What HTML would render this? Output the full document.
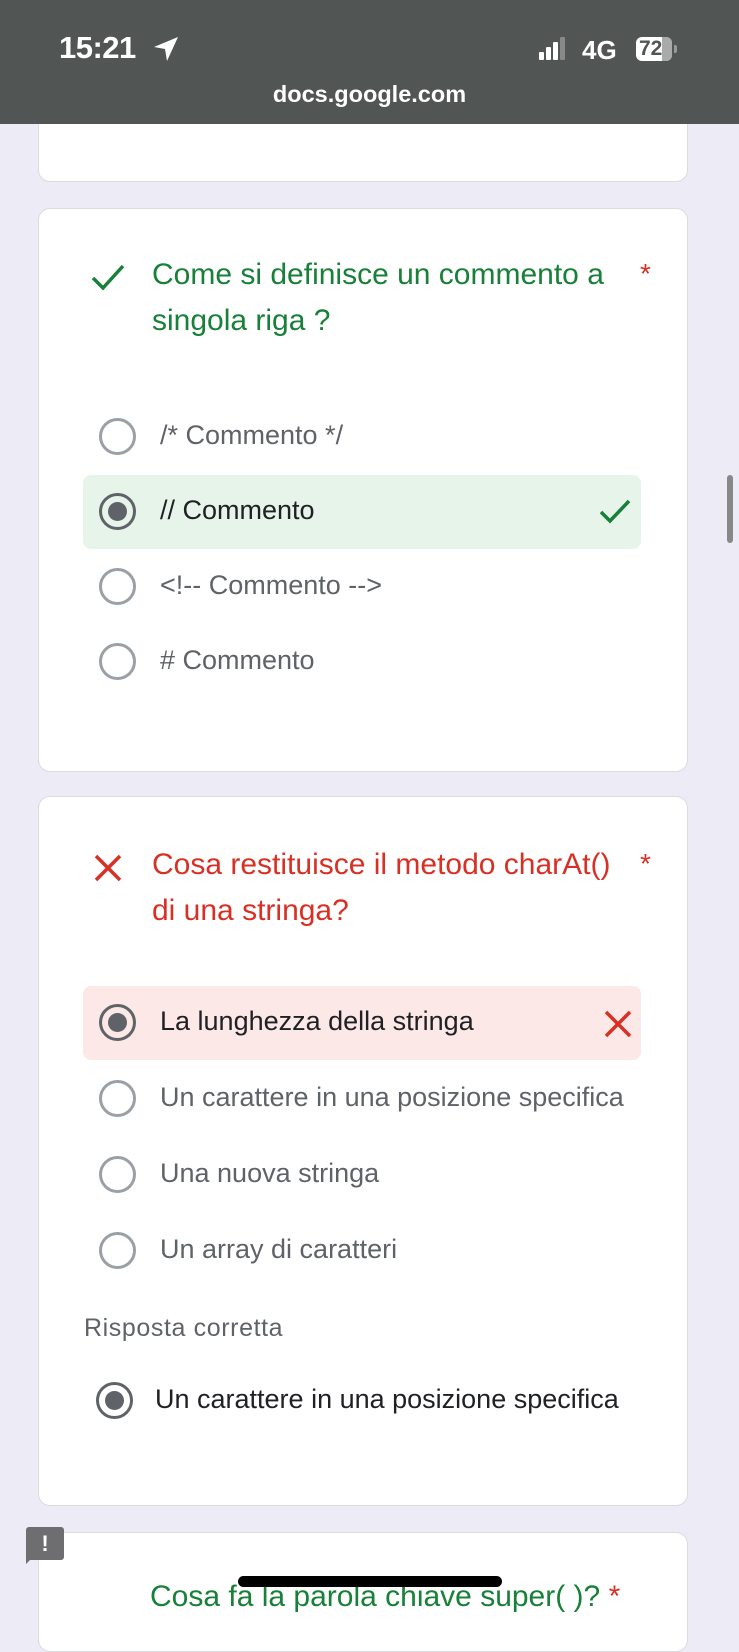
<!DOCTYPE html>
<html><head><style>
*{margin:0;padding:0;box-sizing:border-box}
body{width:739px;height:1600px;overflow:hidden;background:#ecebf6;font-family:"Liberation Sans",Roboto,sans-serif;position:relative}
.hdr{position:absolute;left:0;top:0;width:739px;height:124px;background:#515553;color:#fff;z-index:5}
.card{position:absolute;left:38px;width:650px;background:#fff;border:1.5px solid #dadce0;border-radius:12px}
.abs{position:absolute}
.q{position:absolute;left:152px;font-size:30px;line-height:46px;white-space:nowrap}
.opt{position:absolute;left:83px;width:558px;height:74px}
.r{position:absolute;left:16px;top:18px;width:37px;height:37px;border:3px solid #9aa0a6;border-radius:50%}
.r.s{border-color:#5f6368}
.r.s::after{content:"";position:absolute;left:6px;top:6px;width:19px;height:19px;border-radius:50%;background:#5f6368}
.t{position:absolute;left:77px;top:20px;font-size:27px;color:#5f6368;white-space:nowrap}
</style></head><body>
<div class="hdr">
 <div class="abs" style="left:59px;top:30px;font-size:31px;font-weight:bold;letter-spacing:-0.5px">15:21</div>
 <svg class="abs" style="left:152px;top:35px" width="28" height="28" viewBox="0 0 28 28"><path d="M26 2 L2 12 L13 14 L15 26 Z" fill="#fff"/></svg>
 <div class="abs" style="left:539px;top:52px;width:5px;height:8px;background:#fff;border-radius:1px"></div>
 <div class="abs" style="left:546px;top:47px;width:5px;height:13px;background:#fff;border-radius:1px"></div>
 <div class="abs" style="left:553px;top:42px;width:5px;height:18px;background:#fff;border-radius:1px"></div>
 <div class="abs" style="left:560px;top:37px;width:5px;height:23px;background:#888;border-radius:1px"></div>
 <div class="abs" style="left:582px;top:35px;font-size:26px;font-weight:bold">4G</div>
 <div class="abs" style="left:636px;top:37px;width:36px;height:24px;background:#fff;border-radius:6px;overflow:hidden"><div style="position:absolute;right:0;top:0;width:10px;height:24px;background:#aaa"></div><div style="position:absolute;left:3px;top:0;font-size:21px;font-weight:bold;color:#515553;line-height:24px">72</div></div>
 <div class="abs" style="left:674px;top:45px;width:3px;height:8px;background:#999;border-radius:0 2px 2px 0"></div>
 <div class="abs" style="left:0;width:739px;top:81px;text-align:center;font-size:23.5px;font-weight:bold">docs.google.com</div>
</div>

<div class="card" style="top:100px;height:82px"></div>

<div class="card" style="top:208px;height:564px"></div>
<svg class="abs" style="left:90px;top:262px" width="36" height="30" viewBox="0 0 36 30"><path d="M3 16 L13 26 L33 4" fill="none" stroke="#188038" stroke-width="3.5"/></svg>
<div class="q" style="top:252px;color:#188038">Come si definisce un commento a<br>singola riga ?</div>
<div class="abs" style="left:640px;top:258px;font-size:28px;color:#d93025">*</div>
<div class="opt" style="top:400px"><div class="r"></div><div class="t">/* Commento */</div></div>
<div class="opt" style="top:475px;background:#e6f4ea;border-radius:8px"><div class="r s"></div><div class="t" style="color:#202124">// Commento</div>
<svg class="abs" style="left:515px;top:22px" width="36" height="30" viewBox="0 0 36 30"><path d="M3 15 L12 24 L31 4" fill="none" stroke="#188038" stroke-width="3.5"/></svg></div>
<div class="opt" style="top:550px"><div class="r"></div><div class="t">&lt;!-- Commento --&gt;</div></div>
<div class="opt" style="top:625px"><div class="r"></div><div class="t"># Commento</div></div>

<div class="card" style="top:796px;height:710px"></div>
<svg class="abs" style="left:92px;top:852px" width="32" height="32" viewBox="0 0 32 32"><path d="M4 4 L28 28 M28 4 L4 28" stroke="#d93025" stroke-width="3.5"/></svg>
<div class="q" style="top:842px;color:#d93025">Cosa restituisce il metodo charAt()<br>di una stringa?</div>
<div class="abs" style="left:640px;top:848px;font-size:28px;color:#d93025">*</div>
<div class="opt" style="top:986px;background:#fce8e6;border-radius:8px"><div class="r s"></div><div class="t" style="color:#202124">La lunghezza della stringa</div>
<svg class="abs" style="left:520px;top:23px" width="30" height="30" viewBox="0 0 30 30"><path d="M3 3 L27 27 M27 3 L3 27" stroke="#d93025" stroke-width="3.5"/></svg></div>
<div class="opt" style="top:1062px"><div class="r"></div><div class="t">Un carattere in una posizione specifica</div></div>
<div class="opt" style="top:1138px"><div class="r"></div><div class="t">Una nuova stringa</div></div>
<div class="opt" style="top:1214px"><div class="r"></div><div class="t">Un array di caratteri</div></div>
<div class="abs" style="left:84px;top:1314px;font-size:25px;letter-spacing:0.6px;color:#5f6368">Risposta corretta</div>
<div class="opt" style="top:1364px;left:80px"><div class="r s"></div><div class="t" style="color:#202124;left:75px">Un carattere in una posizione specifica</div></div>

<div class="card" style="top:1532px;height:120px"></div>
<div class="abs" style="left:26px;top:1527px;width:38px;height:33px;background:#6e6e70;border-radius:3px;color:#fff;font-weight:bold;font-size:22px;text-align:center;line-height:33px">!</div>
<div class="abs" style="left:26px;top:1556px;width:0;height:0;border-left:8px solid #6e6e70;border-bottom:8px solid transparent"></div>
<div class="abs" style="left:150px;top:1580px;font-size:30px;color:#188038;white-space:nowrap">Cosa fa la parola chiave super( )? <span style="color:#d93025">*</span></div>
<div class="abs" style="left:238px;top:1576px;width:264px;height:11px;background:#000;border-radius:6px"></div>
<div class="abs" style="left:727px;top:475px;width:6px;height:68px;background:#888;border-radius:3px"></div>
</body></html>
